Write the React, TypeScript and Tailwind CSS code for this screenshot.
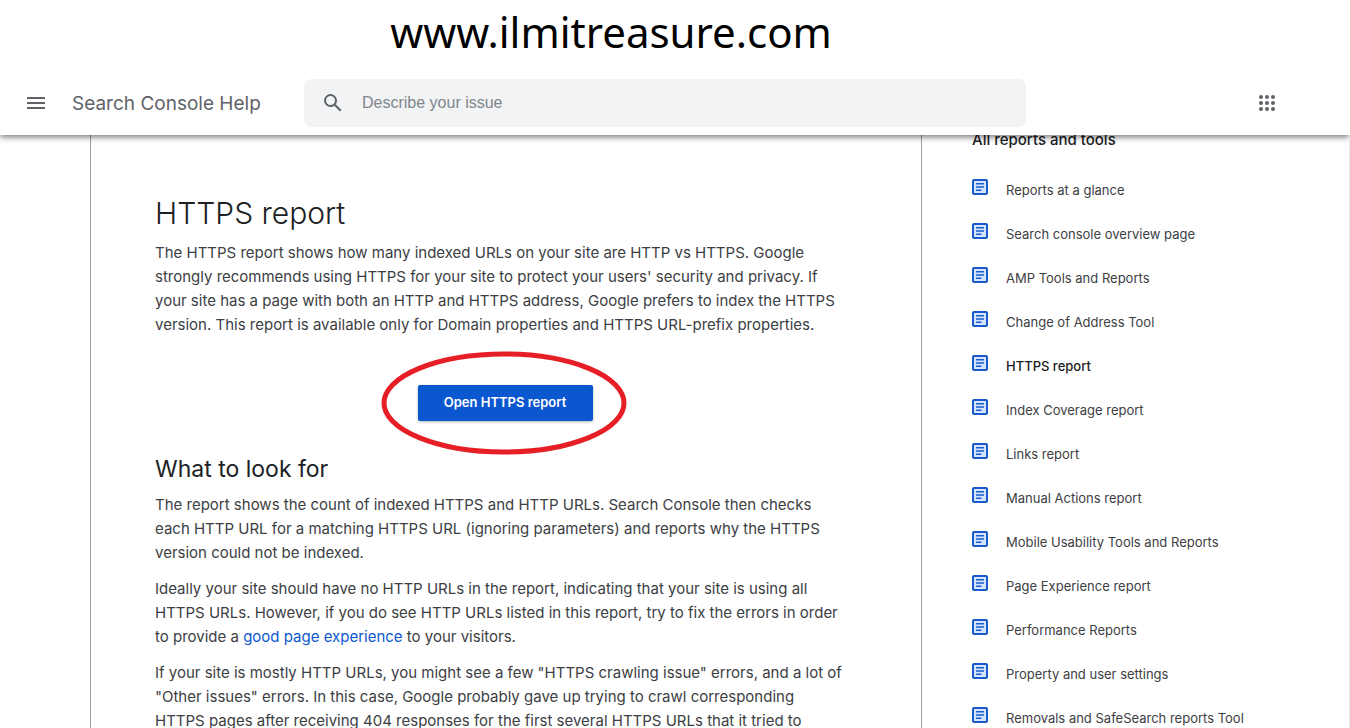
import React from "react";

const reports = [
  "Reports at a glance",
  "Search console overview page",
  "AMP Tools and Reports",
  "Change of Address Tool",
  "HTTPS report",
  "Index Coverage report",
  "Links report",
  "Manual Actions report",
  "Mobile Usability Tools and Reports",
  "Page Experience report",
  "Performance Reports",
  "Property and user settings",
  "Removals and SafeSearch reports Tool",
];

const current = "HTTPS report";

function MenuIcon() {
  return (
    <svg width="18" height="12" viewBox="0 0 18 12" fill="#5f6368" aria-hidden="true">
      <path d="M0 0h18v2H0zM0 5h18v2H0zM0 10h18v2H0z" />
    </svg>
  );
}

function SearchIcon() {
  return (
    <svg width="24" height="24" viewBox="0 0 24 24" fill="#5f6368" aria-hidden="true">
      <path d="M20.49 19l-5.73-5.73C15.53 12.2 16 10.91 16 9.5A6.5 6.5 0 1 0 9.5 16c1.41 0 2.7-.47 3.77-1.24L19 20.49 20.49 19zM5 9.5C5 7.01 7.01 5 9.5 5S14 7.01 14 9.5 11.99 14 9.5 14 5 11.99 5 9.5z" />
    </svg>
  );
}

function AppsIcon() {
  return (
    <svg width="16" height="16" viewBox="0 0 16 16" fill="#5f6368" aria-hidden="true">
      {[2, 8, 14].map((cy) =>
        [2, 8, 14].map((cx) => <circle key={`${cx}-${cy}`} cx={cx} cy={cy} r="2" />)
      )}
    </svg>
  );
}

function ArticleIcon() {
  return (
    <svg width="16" height="16" viewBox="0 0 16 16" className="shrink-0" aria-hidden="true">
      <rect x="1" y="1" width="14" height="14" rx="1" fill="#d3e5fd" stroke="#1a5bcb" strokeWidth="2" />
      <path d="M4 4h8v1.5H4zM4 7.2h8v1.5H4zM4 10.5h5.5V12H4z" fill="#1a5bcb" />
    </svg>
  );
}

export default function App() {
  return (
    <div className="flex h-screen flex-col overflow-hidden bg-white font-['Inter',sans-serif] text-[#202124]">
      <div className="flex h-[71px] shrink-0 justify-center pr-[128px] pt-1 font-['Noto_Sans',sans-serif] text-[42px] leading-[56px] text-black">
        www.ilmitreasure.com
      </div>

      <header className="relative z-10 mr-px flex h-16 shrink-0 items-center bg-white shadow-[0_2px_6px_0_rgba(0,0,0,0.55)] [clip-path:inset(0_0_-12px_0)]">
        <button type="button" aria-label="Main menu" className="ml-[27px]">
          <MenuIcon />
        </button>
        <a href="#home" className="ml-[27px] w-[232px] shrink-0 whitespace-nowrap pt-0.5 text-[19px] font-normal leading-6 text-[#5f6368]">
          Search Console Help
        </a>
        <label className="flex h-12 w-full max-w-[722px] items-center gap-[17px] rounded-lg bg-[#f1f3f4] px-[17px]">
          <SearchIcon />
          <input
            type="search"
            aria-label="Describe your issue"
            placeholder="Describe your issue"
            className="min-w-0 flex-1 bg-transparent font-['Liberation_Sans',sans-serif] text-base text-[#202124] outline-none placeholder:text-[#80868b]"
          />
        </label>
        <button type="button" aria-label="Google apps" className="ml-auto mr-[74px]">
          <AppsIcon />
        </button>
      </header>

      <div className="grid min-h-0 flex-1 grid-cols-[minmax(0,832px)_minmax(0,1fr)] overflow-hidden border-r border-[#e8eaed] pl-[90px]">
        <main className="border-x border-[#9aa0a6] pl-16 pr-[66px] pt-[58px] text-[15px] font-normal leading-6 text-[#3c4043]">
          <h1 className="text-[30px] font-light leading-10 text-[#202124]">HTTPS report</h1>
          <p className="mt-2 whitespace-nowrap">
            The HTTPS report shows how many indexed URLs on your site are HTTP vs HTTPS. Google
            <br />
            strongly recommends using HTTPS for your site to protect your users' security and privacy. If
            <br />
            your site has a page with both an HTTP and HTTPS address, Google prefers to index the HTTPS
            <br />
            version. This report is available only for Domain properties and HTTPS URL-prefix properties.
          </p>

          <div className="mt-4 flex h-[100px] items-center justify-center">
            <div className="relative">
              <button
                type="button"
                className="h-9 w-[175px] rounded-xs bg-[#0b57d0] pb-0.5 text-[13px] font-semibold text-white shadow-[0_1px_3px_rgba(60,64,67,0.4)]"
              >
                Open HTTPS report
              </button>
              <svg
                width="246"
                height="104"
                viewBox="0 0 246 104"
                className="pointer-events-none absolute -left-[37px] -top-[34px] max-w-none"
                aria-hidden="true"
              >
                <ellipse cx="123" cy="52" rx="120" ry="49" fill="none" stroke="#e61e25" strokeWidth="5" />
              </svg>
            </div>
          </div>

          <h2 className="text-[23px] leading-8 text-[#202124]">What to look for</h2>
          <p className="mt-2 whitespace-nowrap">
            The report shows the count of indexed HTTPS and HTTP URLs. Search Console then checks
            <br />
            each HTTP URL for a matching HTTPS URL (ignoring parameters) and reports why the HTTPS
            <br />
            version could not be indexed.
          </p>
          <p className="mt-3 whitespace-nowrap">
            Ideally your site should have no HTTP URLs in the report, indicating that your site is using all
            <br />
            HTTPS URLs. However, if you do see HTTP URLs listed in this report, try to fix the errors in order
            <br />
            to provide a{" "}
            <a href="#page-experience" className="text-[#0b57d0]">
              good page experience
            </a>{" "}
            to your visitors.
          </p>
          <p className="mt-3 whitespace-nowrap">
            If your site is mostly HTTP URLs, you might see a few "HTTPS crawling issue" errors, and a lot of
            <br />
            "Other issues" errors. In this case, Google probably gave up trying to crawl corresponding
            <br />
            HTTPS pages after receiving 404 responses for the first several HTTPS URLs that it tried to
          </p>
        </main>

        <aside className="-mt-[7px] pl-[50px]">
          <h2 className="text-[15px] font-medium leading-6">All reports and tools</h2>
          <ul className="mt-[15px]">
            {reports.map((name) => (
              <li key={name}>
                <a
                  href="#report"
                  className={
                    name === current
                      ? "flex h-11 items-center gap-[18px] text-[13px] font-medium"
                      : "flex h-11 items-center gap-[18px] text-[13px] font-normal text-[#3c4043]"
                  }
                >
                  <span className="pb-1">
                    <ArticleIcon />
                  </span>
                  <span className="whitespace-nowrap pt-[3px]">{name}</span>
                </a>
              </li>
            ))}
          </ul>
        </aside>
      </div>
    </div>
  );
}
